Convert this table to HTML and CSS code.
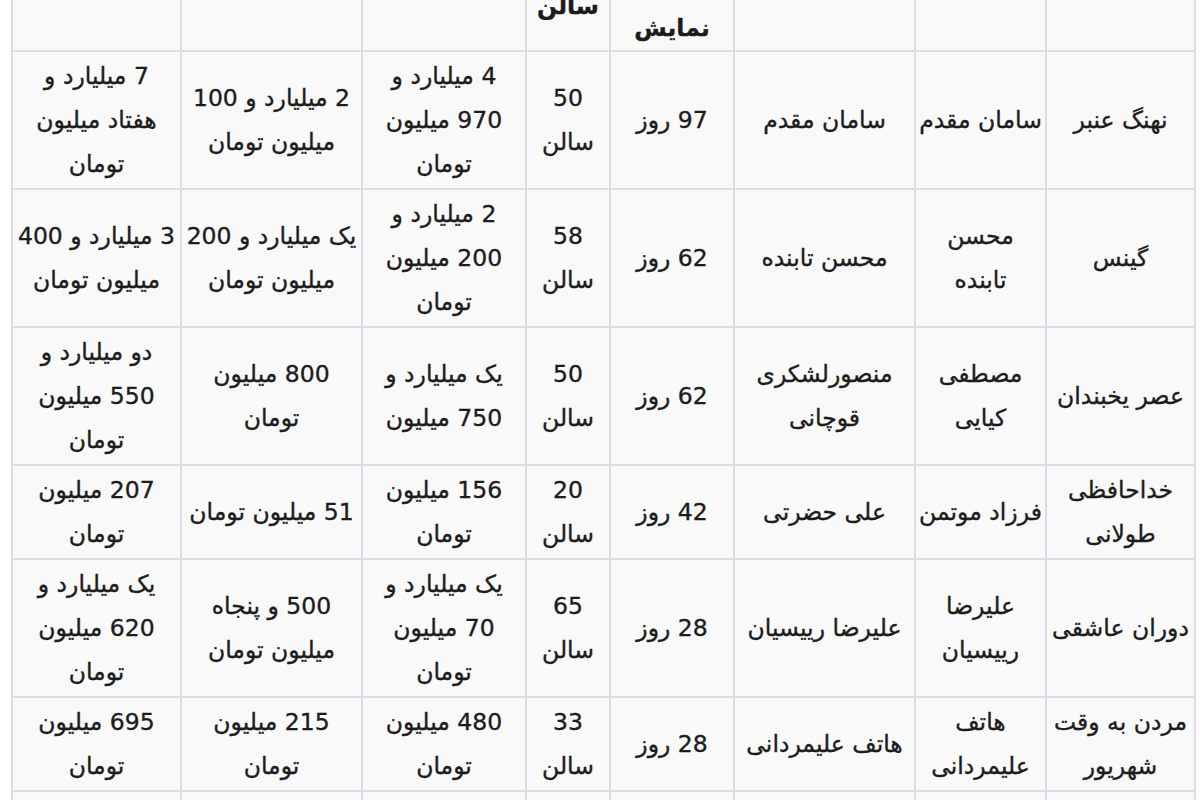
FILE: index.html
```html
<!DOCTYPE html>
<html lang="fa" dir="rtl">
<head>
<meta charset="utf-8">
<title>فروش فیلم‌ها</title>
<link rel="stylesheet" href="styles.css">
</head>
<body>
<div class="page">
<table class="sales">
  <colgroup>
    <col class="c-film"><col class="c-dir"><col class="c-prod"><col class="c-days"><col class="c-hall"><col class="c-f"><col class="c-g"><col class="c-h">
  </colgroup>
  <thead>
    <tr>
      <th>نام فیلم</th>
      <th>کارگردان</th>
      <th>تهیه کننده</th>
      <th>مدت<br>زمان<br>نمایش</th>
      <th>تعداد<br>سالن</th>
      <th>فروش تهران</th>
      <th>فروش شهرستان</th>
      <th>فروش کل</th>
    </tr>
  </thead>
  <tbody>
    <tr>
      <td>نهنگ عنبر</td>
      <td>سامان مقدم</td>
      <td>سامان مقدم</td>
      <td>97 روز</td>
      <td>50<br>سالن</td>
      <td>4 میلیارد و<br>970 میلیون<br>تومان</td>
      <td>2 میلیارد و 100<br>میلیون تومان</td>
      <td>7 میلیارد و<br>هفتاد میلیون<br>تومان</td>
    </tr>
    <tr>
      <td>گینس</td>
      <td>محسن<br>تابنده</td>
      <td>محسن تابنده</td>
      <td>62 روز</td>
      <td>58<br>سالن</td>
      <td>2 میلیارد و<br>200 میلیون<br>تومان</td>
      <td>یک میلیارد و 200<br>میلیون تومان</td>
      <td>3 میلیارد و 400<br>میلیون تومان</td>
    </tr>
    <tr>
      <td>عصر یخبندان</td>
      <td>مصطفی<br>کیایی</td>
      <td>منصورلشکری<br>قوچانی</td>
      <td>62 روز</td>
      <td>50<br>سالن</td>
      <td>یک میلیارد و<br>750 میلیون</td>
      <td>800 میلیون<br>تومان</td>
      <td>دو میلیارد و<br>550 میلیون<br>تومان</td>
    </tr>
    <tr>
      <td>خداحافظی<br>طولانی</td>
      <td>فرزاد موتمن</td>
      <td>علی حضرتی</td>
      <td>42 روز</td>
      <td>20<br>سالن</td>
      <td>156 میلیون<br>تومان</td>
      <td>51 میلیون تومان</td>
      <td>207 میلیون<br>تومان</td>
    </tr>
    <tr>
      <td>دوران عاشقی</td>
      <td>علیرضا<br>رییسیان</td>
      <td>علیرضا رییسیان</td>
      <td>28 روز</td>
      <td>65<br>سالن</td>
      <td>یک میلیارد و<br>70 میلیون<br>تومان</td>
      <td>500 و پنجاه<br>میلیون تومان</td>
      <td>یک میلیارد و<br>620 میلیون<br>تومان</td>
    </tr>
    <tr>
      <td>مردن به وقت<br>شهریور</td>
      <td>هاتف<br>علیمردانی</td>
      <td>هاتف علیمردانی</td>
      <td>28 روز</td>
      <td>33<br>سالن</td>
      <td>480 میلیون<br>تومان</td>
      <td>215 میلیون<br>تومان</td>
      <td>695 میلیون<br>تومان</td>
    </tr>
    <tr>
      <td>ماجرای<br>نیمروز</td>
      <td>محمدحسین<br>مهدویان</td>
      <td>محمود رضوی</td>
      <td>27 روز</td>
      <td>40<br>سالن</td>
      <td>315 میلیون<br>تومان</td>
      <td>180 میلیون<br>تومان</td>
      <td>495 میلیون<br>تومان</td>
    </tr>
  </tbody>
</table>
</div>
</body>
</html>
```
FILE: styles.css
```css
html, body {
  margin: 0;
  padding: 0;
  background: #ffffff;
}

.page {
  padding: 0 4px 0 12px;
  overflow: hidden;
  height: 800px;
}

.sales {
  width: 1184px;
  margin-top: -89px;
  border-collapse: collapse;
  table-layout: fixed;
  font-family: Tahoma, "DejaVu Sans", sans-serif;
  font-size: 23.5px;
  line-height: 44px;
  color: #1c1c1c;
  -webkit-text-stroke: 0.35px #1c1c1c;
  background: #f9f9f9;
  direction: rtl;
}

.c-film { width: 149px; }
.c-dir  { width: 131px; }
.c-prod { width: 181px; }
.c-days { width: 124px; }
.c-hall { width: 84px; }
.c-f    { width: 164px; }
.c-g    { width: 181px; }
.c-h    { width: 169px; }

.sales th,
.sales td {
  border: 2px solid #dcdce4;
  padding: 2px 1px;
  text-align: center;
  vertical-align: middle;
  white-space: nowrap;
  overflow: hidden;
}

.sales th {
  font-weight: bold;
  padding: 5px 1px 0;
}
```
